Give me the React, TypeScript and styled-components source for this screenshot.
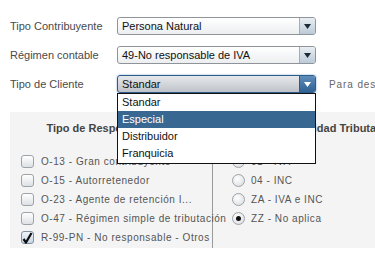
import React from 'react'
import styled, { createGlobalStyle, css } from 'styled-components'

const GlobalStyle = createGlobalStyle`
  html, body {
    margin: 0;
    padding: 0;
    background: #ffffff;
    overflow: hidden;
  }
  body {
    font-family: "Liberation Sans", Arial, sans-serif;
  }
`

const Page = styled.div`
  width: 375px;
  height: 255px;
  padding: 17px 0 0 10px;
  box-sizing: border-box;
  position: relative;
`

const Form = styled.div`
  display: flex;
  flex-direction: column;
  gap: 11px;
`

const Row = styled.div`
  display: flex;
  align-items: center;
  height: 18px;
`

const Label = styled.div`
  width: 107px;
  flex-shrink: 0;
  font-size: 11px;
  color: #4a4a4a;
  white-space: nowrap;
`

const SelectWrap = styled.div`
  position: relative;
  flex-shrink: 0;
`

const SelectBox = styled.div<{ $focused?: boolean }>`
  width: 199px;
  height: 18px;
  box-sizing: border-box;
  display: flex;
  flex-shrink: 0;
  border: 1px solid #8e949a;
  border-radius: 3px;
  background: linear-gradient(#ffffff, #eceef0);
  overflow: hidden;
  ${({ $focused }) =>
    $focused &&
    css`
      border-color: #2d5c8a;
      background: linear-gradient(#e6e8eb, #bfc3c9);
      box-shadow: 0 0 2px #6f9cc9;
    `}
`

const SelectText = styled.div`
  flex: 1;
  padding-left: 4px;
  font-size: 11px;
  line-height: 16px;
  color: #111;
  white-space: nowrap;
`

const ArrowButton = styled.div<{ $focused?: boolean }>`
  width: 15px;
  border-left: 1px solid #a3adb8;
  background: linear-gradient(#e9eef3, #bccad7);
  display: flex;
  align-items: center;
  justify-content: center;
  ${({ $focused }) =>
    $focused &&
    css`
      border-left-color: #2d5c8a;
      background: linear-gradient(#5f8dbb, #2f6193);
    `}
`

const Hint = styled.div`
  margin-left: 13px;
  flex-shrink: 0;
  font-size: 10px;
  letter-spacing: 0.9px;
  color: #666;
  white-space: nowrap;
`

const DropList = styled.div`
  position: absolute;
  left: 0;
  top: 18px;
  width: 199px;
  box-sizing: border-box;
  background: #fff;
  border: 1px solid #111;
  z-index: 10;
  padding-bottom: 1px;
`

const DropItem = styled.div<{ $active?: boolean }>`
  height: 17px;
  line-height: 17px;
  padding-left: 4px;
  font-size: 11px;
  color: ${({ $active }) => ($active ? '#fff' : '#111')};
  background: ${({ $active }) => ($active ? '#386792' : 'transparent')};
`

const Panel = styled.div`
  margin-top: 19px;
  width: 415px;
  background: #f4f4f4;
  display: grid;
  grid-template-columns: 203px 212px;
  padding-top: 8px;
`

const ColumnHeader = styled.div`
  text-align: center;
  font-size: 11px;
  font-weight: bold;
  color: #444;
  height: 16px;
  line-height: 16px;
  white-space: nowrap;
  margin-bottom: 16px;
`

const List = styled.div<{ $divider?: boolean; $indent: number }>`
  display: flex;
  flex-direction: column;
  padding-left: ${({ $indent }) => $indent}px;
  padding-bottom: 1px;
  ${({ $divider }) => $divider && 'border-right: 1px solid #9a9a9a;'}
`

const Option = styled.div<{ $gap: number }>`
  display: flex;
  align-items: center;
  gap: ${({ $gap }) => $gap}px;
  height: 19px;
  font-size: 10px;
  letter-spacing: 0.55px;
  color: #555;
  white-space: nowrap;
`

const CheckBox = styled.span<{ $checked?: boolean }>`
  width: 13px;
  height: 13px;
  box-sizing: border-box;
  border: 1px solid ${({ $checked }) => ($checked ? '#7f8fa0' : '#9ea3a8')};
  border-radius: 3px;
  background: ${({ $checked }) =>
    $checked ? 'linear-gradient(#eef4fa, #c7d6e5)' : 'linear-gradient(#ffffff, #dde1e5)'};
  display: flex;
  align-items: center;
  justify-content: center;
  flex-shrink: 0;
  overflow: visible;
`

const Radio = styled.span`
  width: 13px;
  height: 13px;
  box-sizing: border-box;
  border: 1px solid #9ea3a8;
  border-radius: 50%;
  background: radial-gradient(circle at 40% 35%, #ffffff, #d6dade);
  display: flex;
  align-items: center;
  justify-content: center;
  flex-shrink: 0;
`

const Dot = styled.span`
  width: 5px;
  height: 5px;
  border-radius: 50%;
  background: #111;
`

function Arrow({ color }: { color: string }) {
  return (
    <svg width="7" height="5" viewBox="0 0 7 5">
      <path d="M0 0 H7 L3.5 5 Z" fill={color} />
    </svg>
  )
}

function Select({ value, focused }: { value: string; focused?: boolean }) {
  return (
    <SelectBox $focused={focused}>
      <SelectText>{value}</SelectText>
      <ArrowButton $focused={focused}>
        <Arrow color={focused ? '#ffffff' : '#1d2a38'} />
      </ArrowButton>
    </SelectBox>
  )
}

const responsabilidades = [
  { text: 'O-13 - Gran contribuyente', checked: false },
  { text: 'O-15 - Autorretenedor', checked: false },
  { text: 'O-23 - Agente de retención I...', checked: false },
  { text: 'O-47 - Régimen simple de tributación', checked: false },
  { text: 'R-99-PN - No responsable - Otros', checked: true },
]

const tributos = [
  { text: '01 - IVA', selected: false },
  { text: '04 - INC', selected: false },
  { text: 'ZA - IVA e INC', selected: false },
  { text: 'ZZ - No aplica', selected: true },
]

const tiposCliente = ['Standar', 'Especial', 'Distribuidor', 'Franquicia']

export default function App() {
  return (
    <Page>
      <GlobalStyle />
      <Form>
        <Row>
          <Label>Tipo Contribuyente</Label>
          <Select value="Persona Natural" />
        </Row>
        <Row>
          <Label>Régimen contable</Label>
          <Select value="49-No responsable de IVA" />
        </Row>
        <Row>
          <Label>Tipo de Cliente</Label>
          <SelectWrap>
            <Select value="Standar" focused />
            <DropList>
              {tiposCliente.map((t) => (
                <DropItem key={t} $active={t === 'Especial'}>
                  {t}
                </DropItem>
              ))}
            </DropList>
          </SelectWrap>
          <Hint>Para descuentos especiales</Hint>
        </Row>
      </Form>
      <Panel>
        <ColumnHeader>Tipo de Responsabilidad</ColumnHeader>
        <ColumnHeader>Responsabilidad Tributaria</ColumnHeader>
        <List $divider $indent={11}>
          {responsabilidades.map((r) => (
            <Option key={r.text} $gap={7}>
              <CheckBox $checked={r.checked}>
                {r.checked && (
                  <svg width="11" height="12" viewBox="0 0 11 12">
                    <path d="M1.5 7 L4 10.5 L9.5 1" fill="none" stroke="#0d0d0d" strokeWidth="2.2" strokeLinejoin="round" />
                  </svg>
                )}
              </CheckBox>
              {r.text}
            </Option>
          ))}
        </List>
        <List $indent={19}>
          {tributos.map((t) => (
            <Option key={t.text} $gap={6}>
              <Radio>{t.selected && <Dot />}</Radio>
              {t.text}
            </Option>
          ))}
        </List>
      </Panel>
    </Page>
  )
}
